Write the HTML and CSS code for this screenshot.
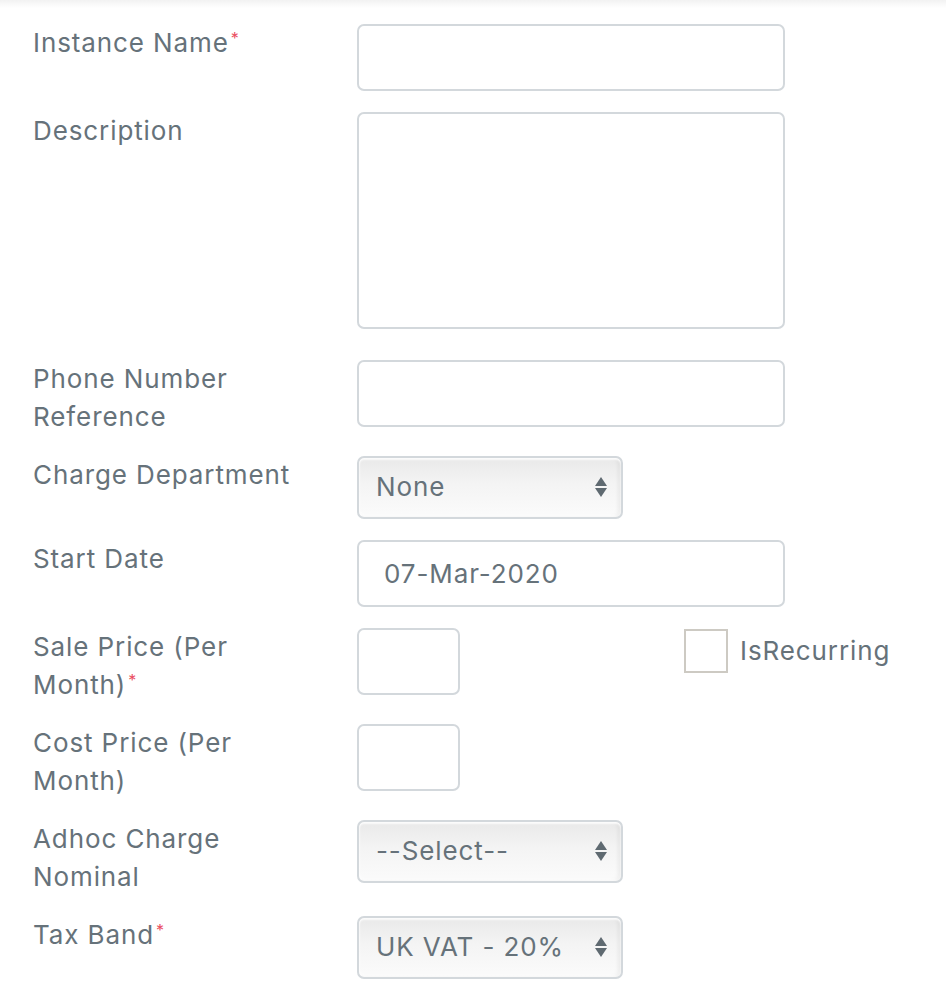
FILE: index.html
```html
<!DOCTYPE html>
<html>
<head>
<meta charset="utf-8">
<link rel="stylesheet" href="styles.css">
</head>
<body>
<div class="topshade"></div>
<form class="form">
  <div class="row">
    <label class="lbl">Instance Name<span class="req">*</span></label>
    <div class="ctl"><input class="inp wide" type="text"></div>
  </div>
  <div class="row row-desc">
    <label class="lbl">Description</label>
    <div class="ctl"><textarea class="inp wide area"></textarea></div>
  </div>
  <div class="row">
    <label class="lbl">Phone Number Reference</label>
    <div class="ctl"><input class="inp wide" type="text"></div>
  </div>
  <div class="row">
    <label class="lbl">Charge Department</label>
    <div class="ctl"><div class="sel"><span>None</span><span class="arrows"></span></div></div>
  </div>
  <div class="row">
    <label class="lbl">Start Date</label>
    <div class="ctl"><div class="inp wide date">07-Mar-2020</div></div>
  </div>
  <div class="row">
    <label class="lbl">Sale Price (Per Month)<span class="req">*</span></label>
    <div class="ctl ctl-split">
      <input class="inp small" type="text">
      <div class="chk"><span class="box"></span><span class="chk-text">IsRecurring</span></div>
    </div>
  </div>
  <div class="row">
    <label class="lbl">Cost Price (Per Month)</label>
    <div class="ctl"><input class="inp small" type="text"></div>
  </div>
  <div class="row">
    <label class="lbl">Adhoc Charge Nominal</label>
    <div class="ctl"><div class="sel"><span>--Select--</span><span class="arrows"></span></div></div>
  </div>
  <div class="row">
    <label class="lbl">Tax Band<span class="req">*</span></label>
    <div class="ctl"><div class="sel"><span>UK VAT - 20%</span><span class="arrows"></span></div></div>
  </div>
</form>
</body>
</html>
```
FILE: styles.css
```css
html, body {
  margin: 0;
  padding: 0;
  background: #fff;
}
body {
  font-family: Inter, "Open Sans", sans-serif;
  color: #66727a;
  font-size: 26px;
  line-height: 37.5px;
  letter-spacing: 0.9px;
}
.topshade {
  height: 8px;
  background: linear-gradient(#f2f2f2, #ffffff);
}
.form {
  padding: 16px 0 0 33px;
}
.row {
  display: flex;
  align-items: flex-start;
  margin-bottom: 21px;
}
.row-desc {
  margin-bottom: 31px;
}
.lbl {
  width: 272px;
  margin-right: 52px;
  flex: none;
}
.req {
  color: #ea4f62;
  font-size: 16px;
  letter-spacing: 0;
  vertical-align: 8px;
  line-height: 1;
  margin-left: 2px;
}
.ctl {
  flex: none;
}
.ctl-split {
  display: flex;
  align-items: flex-start;
}
.inp {
  box-sizing: border-box;
  display: block;
  height: 67px;
  border: 2px solid #d3d8dc;
  border-radius: 7px;
  background: #fff;
  margin: 0;
  padding: 0 24px;
  font: inherit;
  color: inherit;
  letter-spacing: inherit;
  outline: none;
}
.wide {
  width: 428px;
}
.area {
  height: 217px;
  resize: none;
}
.small {
  width: 103px;
}
.date {
  display: flex;
  align-items: center;
  padding-left: 25px;
}
.sel {
  box-sizing: border-box;
  width: 266px;
  height: 63px;
  border: 2px solid #d3d8dc;
  border-radius: 7px;
  background: linear-gradient(#e9e9e9 0%, #f4f4f4 45%, #fbfbfb 100%);
  box-shadow: inset 0 2px 2px rgba(255,255,255,0.9), inset -3px 0 4px rgba(0,0,0,0.06), inset 0 -2px 3px rgba(255,255,255,1);
  display: flex;
  align-items: center;
  justify-content: space-between;
  padding: 0 14px 2px 17px;
}
.arrows {
  position: relative;
  width: 12px;
  height: 22px;
}
.arrows::before, .arrows::after {
  content: "";
  position: absolute;
  left: 0;
  border-left: 6px solid transparent;
  border-right: 6px solid transparent;
}
.arrows::before {
  top: 1px;
  border-bottom: 9px solid #5f6a71;
}
.arrows::after {
  bottom: 1px;
  border-top: 9px solid #5f6a71;
}
.chk {
  display: flex;
  align-items: center;
  margin-left: 224px;
  margin-top: 1px;
}
.box {
  box-sizing: border-box;
  width: 44px;
  height: 44px;
  border: 2px solid #cdcac3;
  background: #fff;
  margin-right: 12px;
}
.chk-text {
  display: block;
}
```
